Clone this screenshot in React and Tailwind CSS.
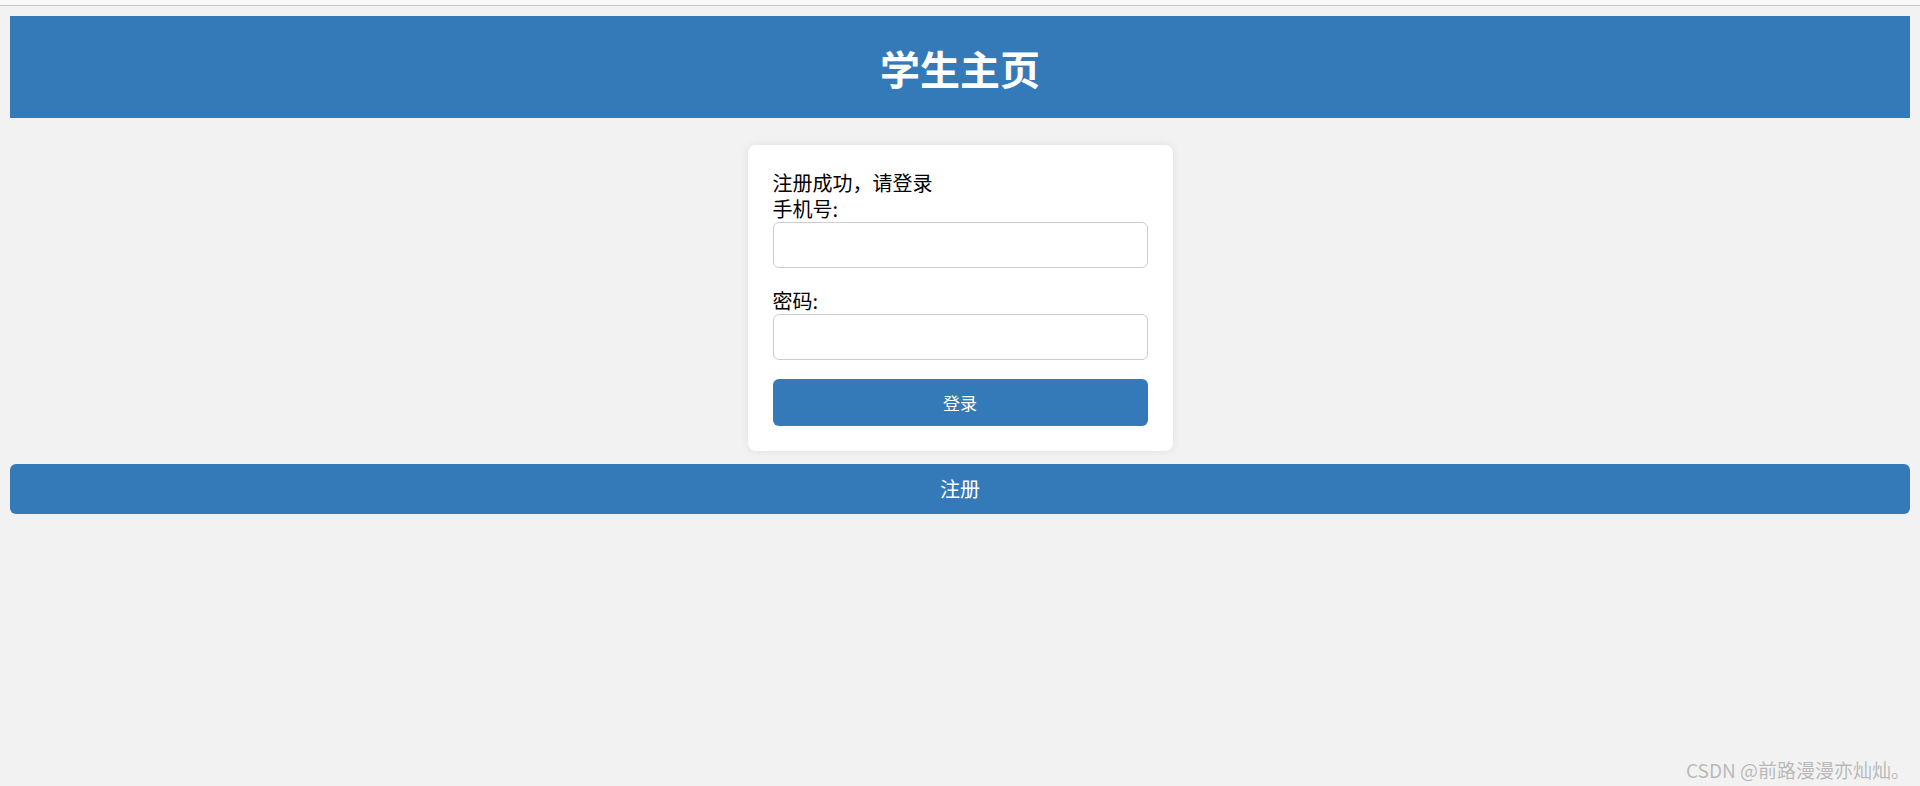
import React from 'react';

const font = { fontFamily: '"Noto Sans CJK SC", "Liberation Sans", sans-serif' };

export default function App() {
  return (
    <div className="relative min-h-screen bg-[#f2f2f2] text-black" style={font}>
      {/* browser strip */}
      <div className="h-[6px] bg-[#f9f9fb] border-b border-[#c8c8c8]" />

      <div className="p-[10px]">
        {/* Header */}
        <div className="h-[102px] bg-[#357ab8] flex items-center justify-center">
          <h1 className="text-[40px] leading-[48px] font-bold text-white pt-[2px]">学生主页</h1>
        </div>

        {/* Login card */}
        <div className="mx-auto mt-[27px] w-[425px] bg-white rounded-[8px] shadow-[0_0_10px_rgba(0,0,0,0.08)] p-[25px]">
          <p className="text-[20px] leading-[26px]">注册成功，请登录</p>
          <label className="block text-[20px] leading-[26px]">手机号:</label>
          <input
            type="text"
            className="block w-full h-[46px] border border-[#cccccc] rounded-[6px] px-3 outline-none"
          />
          <label className="block mt-[20px] text-[20px] leading-[26px]">密码:</label>
          <input
            type="password"
            className="block w-full h-[46px] border border-[#cccccc] rounded-[6px] px-3 outline-none"
          />
          <button className="mt-[19px] w-full h-[47px] bg-[#357ab8] text-white text-[17px] rounded-[6px]">
            登录
          </button>
        </div>

        {/* Register */}
        <button className="mt-[13px] w-full h-[50px] bg-[#357ab8] text-white text-[20px] rounded-[6px]">
          注册
        </button>
      </div>

      {/* watermark */}
      <div className="absolute right-[10px] bottom-[4px] text-[19px] leading-[24px] text-[#b8b8b8] [text-shadow:0_0_1px_#ffffff]">
        CSDN @前路漫漫亦灿灿。
      </div>
    </div>
  );
}
